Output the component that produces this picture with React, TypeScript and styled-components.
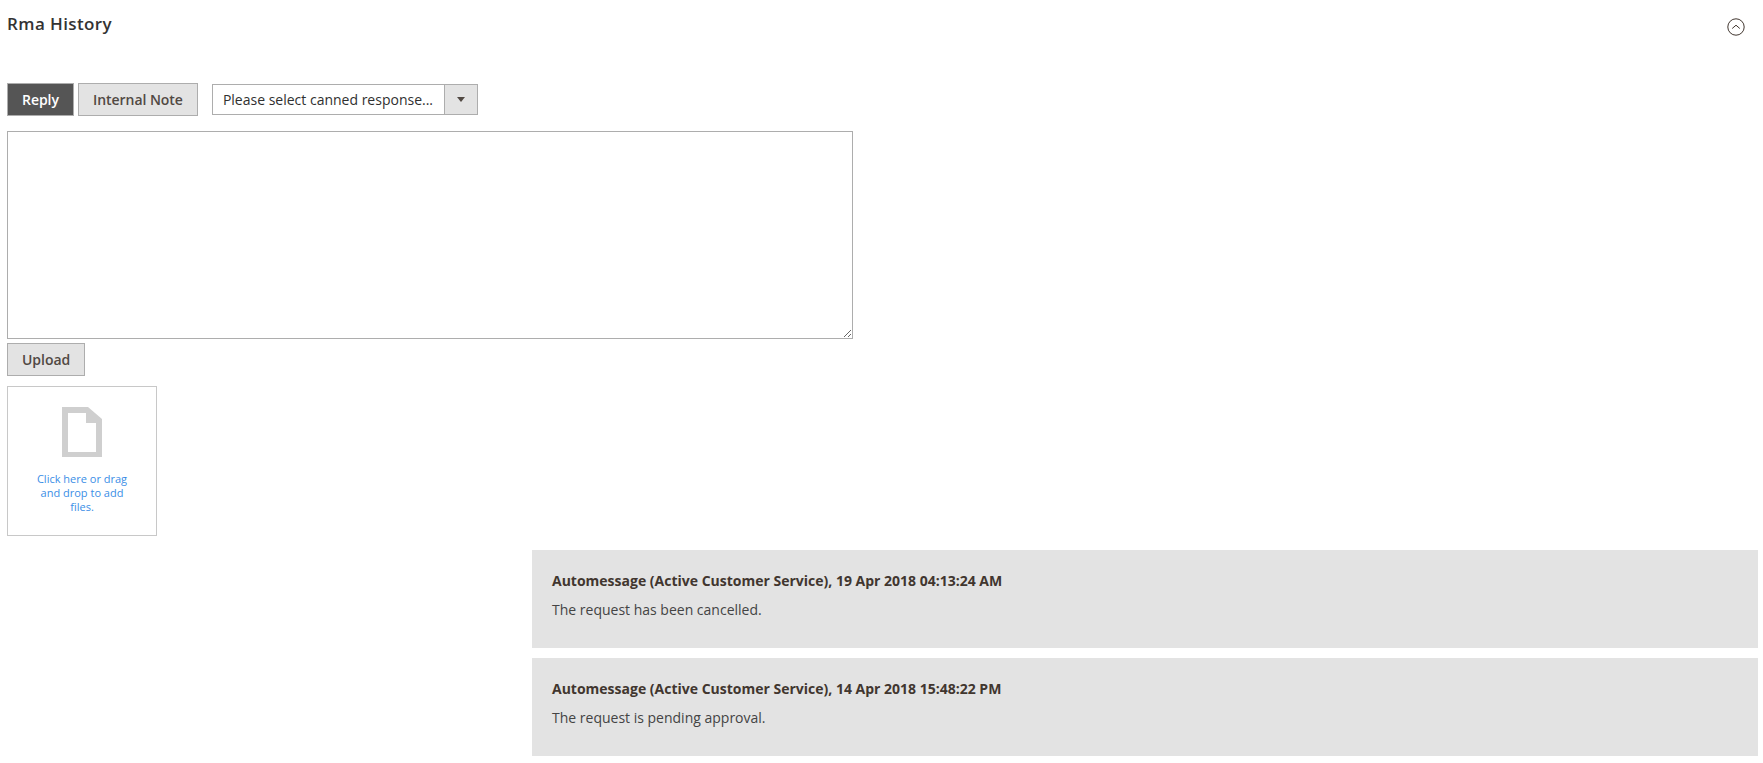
import React from 'react';
import styled, { createGlobalStyle } from 'styled-components';

const messages = [
  {
    title: 'Automessage (Active Customer Service), 19 Apr 2018 04:13:24 AM',
    body: 'The request has been cancelled.',
  },
  {
    title: 'Automessage (Active Customer Service), 14 Apr 2018 15:48:22 PM',
    body: 'The request is pending approval.',
  },
];

const App: React.FC = () => (
  <Page>
    <GlobalStyle />
    <Header>
      <Title>Rma History</Title>
      <CollapseIcon viewBox="0 0 18 18">
        <circle cx="9" cy="9" r="8.2" fill="none" stroke="#41362f" strokeWidth="1" />
        <path d="M5.2 10.5 L9 7.2 L12.8 10.5" fill="none" stroke="#41362f" strokeWidth="1" />
      </CollapseIcon>
    </Header>
    <Toolbar>
      <TabButton $active>Reply</TabButton>
      <TabButton>Internal Note</TabButton>
      <Select>
        <SelectValue>Please select canned response...</SelectValue>
        <SelectArrow>
          <svg width="8" height="5" viewBox="0 0 8 5">
            <path d="M0 0 H8 L4 5 Z" fill="#514943" />
          </svg>
        </SelectArrow>
      </Select>
    </Toolbar>
    <Message />
    <UploadButton>Upload</UploadButton>
    <DropZone>
      <svg width="40" height="50" viewBox="0 0 40 50">
        <path
          fillRule="evenodd"
          d="M0 0 H26 L40 12 V50 H0 Z M6 6 V45 H34 V16 H24 V6 Z"
          fill="#cfcfcf"
        />
      </svg>
      <DropText>Click here or drag and drop to add files.</DropText>
    </DropZone>
    <History>
      {messages.map(m => (
        <HistoryItem key={m.title}>
          <HistoryTitle>{m.title}</HistoryTitle>
          <HistoryBody>{m.body}</HistoryBody>
        </HistoryItem>
      ))}
    </History>
  </Page>
);

export default App;

// Styled

const GlobalStyle = createGlobalStyle`
  html, body {
    margin: 0;
    padding: 0;
    background: #fff;
  }
  body {
    font-family: 'Open Sans', 'Liberation Sans', sans-serif;
    font-size: 14px;
    color: #41362f;
  }
`;

const Page = styled.div`
  display: flex;
  flex-direction: column;
  align-items: flex-start;
  padding: 0 5px 0 7px;
  height: 763px;
  box-sizing: border-box;
  overflow: hidden;
`;

const Header = styled.div`
  display: flex;
  justify-content: space-between;
  align-items: flex-start;
  width: 100%;
  height: 83px;
`;

const Title = styled.h2`
  margin: 14px 0 0;
  font-size: 17px;
  line-height: 20px;
  font-weight: 600;
  letter-spacing: 0.4px;
  color: #333;
`;

const CollapseIcon = styled.svg`
  width: 18px;
  height: 18px;
  margin: 18px 13px 0 0;
`;

const Toolbar = styled.div`
  display: flex;
  align-items: center;
  height: 33px;
  margin-bottom: 15px;
`;

const TabButton = styled.button<{ $active?: boolean }>`
  box-sizing: border-box;
  height: 33px;
  padding: 0 14px;
  margin-right: 4px;
  font-family: inherit;
  font-size: 14px;
  font-weight: 600;
  letter-spacing: -0.04px;
  border: 1px solid #adadad;
  background: ${p => (p.$active ? '#555' : '#e3e3e3')};
  color: ${p => (p.$active ? '#fff' : '#514943')};
`;

const Select = styled.div`
  box-sizing: border-box;
  display: flex;
  height: 31px;
  width: 266px;
  margin-left: 10px;
  border: 1px solid #adadad;
  background: #fff;
`;

const SelectValue = styled.div`
  flex: 1;
  padding-left: 10px;
  font-size: 14px;
  line-height: 29px;
  color: #303030;
  white-space: nowrap;
`;

const SelectArrow = styled.div`
  display: flex;
  align-items: center;
  justify-content: center;
  width: 32px;
  border-left: 1px solid #adadad;
  background: #e3e3e3;
`;

const Message = styled.textarea`
  box-sizing: border-box;
  display: block;
  width: 846px;
  height: 208px;
  margin: 0 0 4px;
  border: 1px solid #adadad;
  background: #fff;
  outline: none;
  font-family: inherit;
`;

const UploadButton = styled(TabButton)`
  margin: 0 0 10px;
`;

const DropZone = styled.div`
  box-sizing: border-box;
  display: flex;
  flex-direction: column;
  align-items: center;
  width: 150px;
  height: 150px;
  padding-top: 20px;
  border: 1px solid #c8c8c8;
`;

const DropText = styled.div`
  width: 100px;
  margin-top: 15px;
  font-size: 11px;
  line-height: 14px;
  text-align: center;
  color: #3a8ee6;
`;

const History = styled.div`
  display: flex;
  flex-direction: column;
  align-self: flex-end;
  gap: 10px;
  width: 1226px;
  margin-top: 14px;
`;

const HistoryItem = styled.div`
  box-sizing: border-box;
  height: 98px;
  padding: 21px 20px 20px;
  background: #e3e3e3;
`;

const HistoryTitle = styled.div`
  font-size: 14px;
  line-height: 19px;
  font-weight: 700;
  color: #41362f;
`;

const HistoryBody = styled.div`
  margin-top: 10px;
  font-size: 14px;
  line-height: 19px;
  color: #444;
`;
